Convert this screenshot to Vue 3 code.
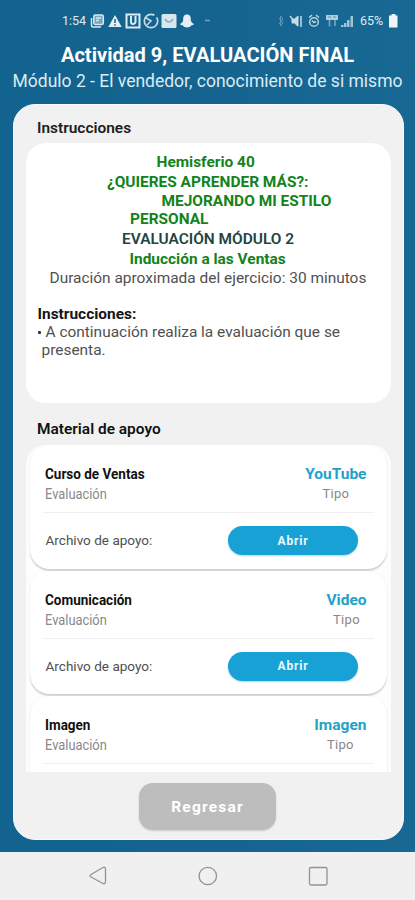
<script setup>
const materials = [
  { name: 'Curso de Ventas', kind: 'YouTube', file: 'Archivo de apoyo:' },
  { name: 'Comunicación', kind: 'Video', file: 'Archivo de apoyo:' },
  { name: 'Imagen', kind: 'Imagen' }
]
</script>

<template>
  <div class="screen">
    <header class="status">
      <div class="left">
        <span class="time">1:54</span>
        <svg class="icons" width="152" height="16" viewBox="0 0 152 16">
          <g fill="none" stroke="#d5e7f1" stroke-width="1.5">
            <path d="M1.500 5v7.500q0 1.500 1.500 1.500h8" />
            <rect x="3.800" y="2" width="9.500" height="9.500" rx="1.500" fill="#d5e7f1" fill-opacity=".5" />
            <path d="M6 5h5M6 7.500h3" />
          </g>
          <path d="M25 2l6.700 12H18.300z" fill="#e4f0f6" />
          <path d="M25 6v4M25 11.200v1.500" stroke="#15648f" stroke-width="1.500" />
          <rect x="36.500" y="1.500" width="13" height="13" fill="none" stroke="#dcebf3" stroke-width="2" />
          <path d="M41 3v6q0 2 2 2t2.500-2V3" fill="none" stroke="#dcebf3" stroke-width="2" />
          <circle cx="61" cy="8" r="6.700" fill="none" stroke="#c4dcea" stroke-width="1.700" stroke-dasharray="35 3" />
          <path d="M55.500 4.500l5.500 3.500-4 4" fill="none" stroke="#c4dcea" stroke-width="1.500" />
          <rect x="71.500" y="1" width="15" height="14" rx="1.500" fill="#d8e6ee" />
          <path d="M75 6q4 6 8 0" fill="none" stroke="#80a9c0" stroke-width="1.500" />
          <path d="M97 1.500c-3 0-4 2-3.800 6-.5 2-2 3-3.200 3.500.5 1.200 2 1.200 3 1.500l1 1.500c1.500-.3 2 .5 3 .5s1.500-.8 3-.5l1-1.500c1-.3 2.500-.3 3-1.500-1.200-.5-2.700-1.500-3.200-3.500.2-4-.8-6-3.800-6z" fill="#e3eff5" />
          <path d="M115 7.500h5" stroke="#72a3bf" stroke-width="1.500" />
        </svg>
      </div>
      <div class="right">
        <svg width="78" height="16" viewBox="0 0 78 16">
          <path d="M1 5l4 5-2.500 3V3L5 6l-4 5" fill="none" stroke="#5f9aba" />
          <path d="M14 6h2.500L20 3v10l-3.500-3H14z" fill="#c7dce7" stroke="#c7dce7" />
          <path d="M23 3v11" stroke="#c7dce7" stroke-width="1.500" />
          <path d="M12 3l8 10" stroke="#c7dce7" stroke-width="1.300" />
          <g fill="none" stroke="#b4d0df" stroke-width="1.500"><circle cx="36" cy="9" r="4.300" /><path d="M31 4.500l3-2.300M41 4.500l-3-2.300M34 7.500l2 2 2-1" /></g>
          <path d="M48 2h12v5H48z" fill="#afccdc" /><path d="M50 4h3M55 4h3" stroke="#5f94b2" /><path d="M51.500 7v6.500M57 7v6" fill="none" stroke="#74a5c0" stroke-width="1.700" />
          <path d="M63 14v-2h2.500v2M66 14v-4h2.500v4M69 14V7h2.500v7M72.500 14V3h2.500v11" fill="#9fc3d7" />
        </svg>
        <span class="battery-text">65%</span>
        <svg width="9" height="14" viewBox="0 0 9 14"><path d="M2.500 0h4v1.500H8.500V13.500H0V1.500h2.500z" fill="#edf5f8" /></svg>
      </div>
    </header>

    <div class="heading">
      <h1>Actividad 9, EVALUACIÓN FINAL</h1>
      <p>Módulo 2 - El vendedor, conocimiento de si mismo</p>
    </div>

    <main class="panel">
      <h2 class="label">Instrucciones</h2>
      <section class="intro">
        <p class="green g1">Hemisferio 40</p>
        <p class="green g2">¿QUIERES APRENDER MÁS?:</p>
        <p class="green g3">MEJORANDO MI ESTILO</p>
        <p class="green g4">PERSONAL</p>
        <p class="dark g5">EVALUACIÓN MÓDULO 2</p>
        <p class="green g6">Inducción a las Ventas</p>
        <p class="body g7">Duración aproximada del ejercicio: 30 minutos</p>
        <p class="strong g8">Instrucciones:</p>
        <p class="body g9"><i class="bullet"></i>A continuación realiza la evaluación que se</p>
        <p class="body g10">presenta.</p>
      </section>
      <h2 class="label support">Material de apoyo</h2>
      <section class="list">
        <article v-for="item in materials" :key="item.name" class="card">
          <div class="top">
            <div class="name">
              <b>{{ item.name }}</b>
              <span>Evaluación</span>
            </div>
            <div class="kind">
              <b>{{ item.kind }}</b>
              <span>Tipo</span>
            </div>
          </div>
          <div v-if="item.file" class="bottom">
            <span class="file">{{ item.file }}</span>
            <button class="open">Abrir</button>
          </div>
        </article>
      </section>
      <button class="back">Regresar</button>
    </main>

    <nav class="nav">
      <svg width="415" height="48" viewBox="0 0 415 48">
        <g fill="none" stroke="#929292" stroke-width="1.300">
          <path d="M91 22.500L102.500 15.700Q105.500 14 105.500 17.500V29Q105.500 33 102.500 31.200L91 25Q89 23.800 91 22.500Z" />
          <circle cx="207.800" cy="24" r="8.700" />
          <rect x="309.500" y="15.500" width="17.500" height="17.500" rx="1.500" />
        </g>
      </svg>
    </nav>
  </div>
</template>

<style>
body { margin: 0; }
</style>

<style scoped>
* { box-sizing: border-box; }
h1, h2, p { margin: 0; white-space: nowrap; }
span, b { white-space: nowrap; }
button { border: 0; padding: 0; font-family: inherit; }
.screen {
  width: 415px; height: 900px; overflow: hidden;
  display: flex; flex-direction: column;
  font-family: Roboto, "Liberation Sans", sans-serif;
  background: linear-gradient(90deg, #12638f 0%, #15648f 50%, #176994 100%);
}
.status { height: 40px; flex: none; display: flex; justify-content: space-between; padding: 12px 17px 0 62px; color: #dcebf3; }
.left, .right { display: flex; height: 17px; align-items: center; }
.time { font-size: 12.5px; width: 28px; }
.right { gap: 4px; }
.battery-text { font-size: 12.5px; width: 25px; }
.heading { height: 64px; flex: none; text-align: center; }
h1 { font-size: 20.100px; line-height: 31px; font-weight: 700; color: #fff; }
.heading p { font-size: 17.500px; line-height: 20px; color: #dcebf4; }
.panel {
  width: 391px; height: 736px; flex: none; margin-left: 12.500px; border-radius: 22px;
  background: #f1f1f1; border: 1px solid #f8fbfc;
  display: flex; flex-direction: column; padding: 0 12px; overflow: hidden;
}
.label { height: 38px; flex: none; line-height: 46px; padding-left: 11.500px; font-size: 15.450px; font-weight: 600; color: #202020; }
.intro { height: 260px; flex: none; border-radius: 20px; background: #fff; padding: 9px 0 0 12px; }
.intro p { height: 18px; line-height: 18px; font-size: 15.450px; display: flex; align-items: center; }
.green { color: #128319; font-weight: 700; }
.dark { color: #1e4540; font-weight: 600; }
.body { color: #505050; }
.strong { color: #151515; font-weight: 700; }
.intro .g1 { padding-left: 119px; height: 20px; }
.intro .g2 { padding-left: 69.500px; height: 20px; }
.intro .g3 { padding-left: 124px; }
.intro .g4 { padding-left: 92.500px; }
.intro .g5 { padding-left: 84.500px; height: 21px; }
.intro .g6 { padding-left: 92px; height: 20px; }
.intro .g7 { padding-left: 12px; }
.intro .g8 { margin-top: 18px; }
.bullet { width: 3px; height: 3px; border-radius: 1px; background: #333; margin-right: 5px; }
.intro .g10 { padding-left: 4px; }
.support { height: 42px; line-height: 53px; color: #111; }
.list { height: 327px; flex: none; overflow: hidden; border-radius: 20px 20px 0 0; background: #fdfdfd; padding: 0 4px; }
.card { height: 123.500px; margin-bottom: 2px; border-radius: 20px; background: #fff; box-shadow: 0 1.500px 1.500px #d0d0d0; }
.top { height: 68px; margin: 0 13px; padding: 19px 7px 0 2.500px; border-bottom: 1px solid #f0f0f0; display: flex; justify-content: space-between; }
.name, .kind { display: flex; flex-direction: column; line-height: 20px; }
.name { transform: scaleX(.9); transform-origin: left; }
.name b { font-size: 15px; color: #111; }
.name span { font-size: 14.300px; color: #888; }
.kind { align-items: center; line-height: 19px; padding-top: 1px; }
.kind b { font-size: 15.500px; color: #22a2cb; }
.kind span { font-size: 13px; color: #888; letter-spacing: .3px; }
.bottom { display: flex; align-items: center; justify-content: space-between; padding: 13px 28.500px 0 16px; }
.file { font-size: 13.550px; color: #505050; padding-bottom: 1px; }
.open { width: 130px; height: 29px; border-radius: 15px; background: #17a1d5; color: #eaf8fd; font-size: 12px; font-weight: 700; letter-spacing: .8px; box-shadow: 0 1px 2px #b5d7e3; }
.back { width: 137px; height: 47px; flex: none; margin: 11px 0 0 113.500px; border-radius: 14px; background: #bdbdbd; color: #fff; font-size: 15.500px; font-weight: 700; letter-spacing: 1.200px; box-shadow: 0 1px 2px #ccc; }
.nav { width: 415px; height: 48px; flex: none; margin-top: 12px; background: #f0f0f0; }
.nav svg { display: block; }
</style>
